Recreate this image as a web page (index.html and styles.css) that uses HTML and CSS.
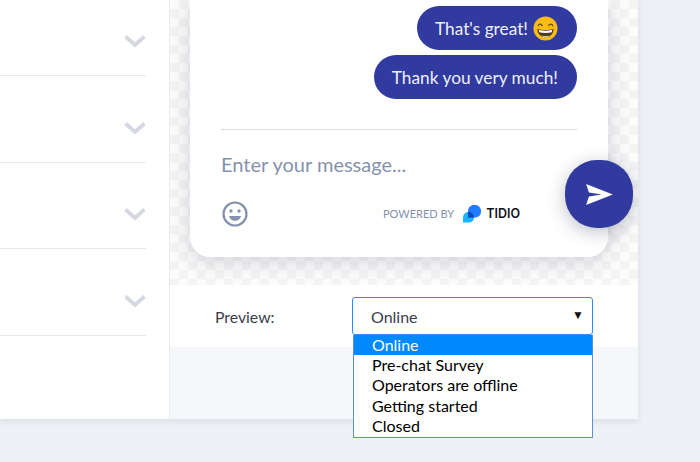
FILE: index.html
```html
<!DOCTYPE html>
<html>
<head>
    <meta charset="UTF-8">
    <title>Chat widget preview</title>
    <link rel="stylesheet" href="styles.css">
</head>
<body>
    <div class="panel">
        <div class="sidebar">
            <div class="accordion-row"><svg class="chevron" viewBox="0 0 22 14"><path d="M1.500 2.500l9.500 8.500 9.500-8.500"/></svg></div>
            <div class="accordion-row"><svg class="chevron" viewBox="0 0 22 14"><path d="M1.500 2.500l9.500 8.500 9.500-8.500"/></svg></div>
            <div class="accordion-row"><svg class="chevron" viewBox="0 0 22 14"><path d="M1.500 2.500l9.500 8.500 9.500-8.500"/></svg></div>
            <div class="accordion-row"><svg class="chevron" viewBox="0 0 22 14"><path d="M1.500 2.500l9.500 8.500 9.500-8.500"/></svg></div>
        </div>

        <div class="preview">
            <div class="stage">
                <div class="chat-card">
                    <div class="messages">
                        <div class="bubble">That's great!
                            <svg class="grin" viewBox="0 0 26 26">
                                <circle cx="13" cy="13" r="12.5" fill="#fbbc16"/>
                                <path d="M5.5 10c.8-2 3-2 4 0M16.5 10c.8-2 3-2 4 0" fill="none" stroke="#5c4a1e" stroke-width="1.4" stroke-linecap="round"/>
                                <path d="M4.5 13.5c5 1.3 12 1.3 17 0-.3 5.5-4 8.5-8.5 8.5s-8.2-3-8.5-8.5z" fill="#4a3b1c"/>
                                <path d="M6 14.5c4.5 1 9.5 1 14 0l-.5 2.500c-4 .8-9 .8-13 0z" fill="#fff"/>
                                <path d="M8.500 20c2.800 1.500 6.200 1.500 9 0-1.200 1.300-2.900 2-4.500 2s-3.300-.7-4.500-2z" fill="#e8e8e8"/>
                            </svg>
                        </div>
                        <div class="bubble">Thank you very much!</div>
                    </div>
                    <div class="composer">
                        <div class="placeholder">Enter your message...</div>
                        <div class="composer-footer">
                            <svg class="smile" viewBox="0 0 26 26">
                                <circle cx="13" cy="13" r="11.5" fill="none" stroke="#8592ad" stroke-width="2.2"/>
                                <circle cx="9" cy="10" r="1.7" fill="#8592ad"/>
                                <circle cx="17" cy="10" r="1.7" fill="#8592ad"/>
                                <path d="M7 15h12c-.5 3-3 4.800-6 4.800s-5.500-1.800-6-4.800z" fill="#8592ad"/>
                            </svg>
                            <div class="powered">
                                <span class="powered-label">POWERED BY</span>
                                <svg class="tidio-mark" viewBox="0 0 18 18">
                                    <path d="M0 12.500c0-3 2.300-5.500 5.500-5.500s5.500 2.500 5.500 5.500-2.500 5-5.500 5H0z" fill="#19b5fe"/>
                                    <path d="M5 6c0-3.300 2.700-6 6-6h1c3.300 0 6 2.700 6 6v1c0 3-2.700 5.500-6 5.500H5z" fill="#1f7bff"/>
                                    <path d="M5 7.100c3.400-.3 6 2.200 6 5.400H5z" fill="#0d47c9"/>
                                </svg>
                                <span class="tidio-name">TIDIO</span>
                            </div>
                        </div>
                    </div>
                </div>
                <div class="send-btn">
                    <svg viewBox="0 0 30 24"><path d="M1 1l28 11L1 23l3-9 13-2-13-2z" fill="#fff"/></svg>
                </div>
            </div>

            <div class="preview-bar">
                <label class="preview-label">Preview:</label>
                <div class="select-wrap">
                    <div class="select-box">Online<span class="select-arrow">&#9660;</span></div>
                    <ul class="select-menu">
                        <li class="selected">Online</li>
                        <li>Pre-chat Survey</li>
                        <li>Operators are offline</li>
                        <li>Getting started</li>
                        <li>Closed</li>
                    </ul>
                </div>
            </div>
            <div class="preview-rest"></div>
        </div>
    </div>
</body>
</html>
```

FILE: styles.css
```css
:root {
    --brand: #313a9f;
    --muted: #8592ad;
}

html, body {
    height: 462px;
    overflow: hidden;
}

body {
    margin: 0;
    background: #edf0f4;
    font-family: 'Lato', sans-serif;
}

.panel {
    display: flex;
    width: 638px;
    height: 419px;
    background: #fff;
    box-shadow: 0 2px 6px rgba(40, 50, 80, 0.1);
}

/* Left column */
.sidebar {
    width: 170px;
    flex-shrink: 0;
    border-right: 1px solid #e9ebf0;
    padding-right: 23px;
    box-sizing: border-box;
    overflow: hidden;
}

.accordion-row {
    height: 86.67px;
    box-sizing: border-box;
    border-bottom: 1px solid #e8e9ee;
    padding-bottom: 27px;
    display: flex;
    justify-content: flex-end;
    align-items: flex-end;
}

.accordion-row:first-child {
    height: 76px;
}

.chevron {
    width: 22px;
    height: 14px;
}

.chevron path {
    fill: none;
    stroke: #d6d8e1;
    stroke-width: 3.8;
}

/* Right column */
.preview {
    flex: 1;
    display: flex;
    flex-direction: column;
    min-width: 0;
}

.stage {
    position: relative;
    height: 285px;
    padding: 0 30px 28px 20px;
    box-sizing: border-box;
    display: flex;
    flex-direction: column;
    justify-content: flex-end;
    overflow: hidden;
    background-color: #fcfcfc;
    background-image: conic-gradient(#f4f4f5 25%, #fcfcfc 25% 50%, #f4f4f5 50% 75%, #fcfcfc 75%);
    background-size: 18px 18px;
}

.chat-card {
    height: 257px;
    background: #fff;
    border-radius: 0 0 20px 20px;
    box-shadow: 0 4px 22px rgba(50, 55, 80, 0.2);
    padding: 6px 31px 0;
    box-sizing: border-box;
}

.messages {
    display: flex;
    flex-direction: column;
    align-items: flex-end;
    gap: 5px;
    padding-bottom: 30px;
    border-bottom: 1px solid #dcdde1;
}

.bubble {
    display: flex;
    align-items: center;
    height: 44px;
    padding: 0 19px 0 18px;
    border-radius: 22px;
    background: var(--brand);
    color: #eef0fb;
    font-size: 17.3px;
    white-space: nowrap;
}

.grin {
    width: 25px;
    height: 25px;
    margin-left: 5px;
}

.placeholder {
    margin-top: 21px;
    height: 26px;
    line-height: 26px;
    font-size: 20px;
    color: var(--muted);
}

.composer-footer {
    display: flex;
    justify-content: space-between;
    align-items: center;
    margin-top: 24px;
    padding-right: 57px;
}

.smile {
    width: 26px;
    height: 26px;
    margin-left: 1px;
}

.powered {
    display: flex;
    align-items: center;
    margin-top: -1px;
}

.powered-label {
    font-size: 11px;
    color: var(--muted);
    margin-right: 9px;
}

.tidio-mark {
    width: 18px;
    height: 18px;
    margin-right: 5px;
}

.tidio-name {
    font-family: 'Inter', sans-serif;
    font-size: 12.5px;
    font-weight: 600;
    color: #10131c;
}

.send-btn {
    position: absolute;
    left: 395px;
    top: 160px;
    width: 68px;
    height: 68px;
    border-radius: 47%;
    background: var(--brand);
    box-shadow: 0 4px 18px rgba(40, 45, 80, 0.3);
    display: flex;
    align-items: center;
    justify-content: center;
}

.send-btn svg {
    width: 29px;
    height: 23px;
}

/* Preview select */
.preview-bar {
    height: 62px;
    padding-left: 45px;
    display: flex;
    align-items: center;
    flex-shrink: 0;
    background: #fff;
}

.preview-label {
    width: 137px;
    font-size: 15.8px;
    color: #3a3e4b;
}

.select-wrap {
    position: relative;
    width: 241px;
}

.select-box {
    height: 38px;
    box-sizing: border-box;
    border: 1px solid #2f8bff;
    border-radius: 3px;
    padding-left: 18px;
    line-height: 38px;
    font-size: 16px;
    color: #3a3e4b;
    position: relative;
}

.select-arrow {
    position: absolute;
    right: 8px;
    top: -2px;
    font-size: 12px;
    color: #111;
}

.select-menu {
    position: absolute;
    top: 38px;
    left: 1px;
    right: 0;
    margin: 0;
    padding: 0 0 1px;
    list-style: none;
    background: #fff;
    border: 1px solid #5d8fd6;
    border-top: 0;
    font-size: 16px;
    color: #000;
}

.select-menu li {
    height: 20.2px;
    line-height: 20px;
    padding-left: 18px;
}

.select-menu .selected {
    background: #0088ff;
    color: #fff;
}

.preview-rest {
    flex: 1;
    background: #f6f7fb;
}
```
